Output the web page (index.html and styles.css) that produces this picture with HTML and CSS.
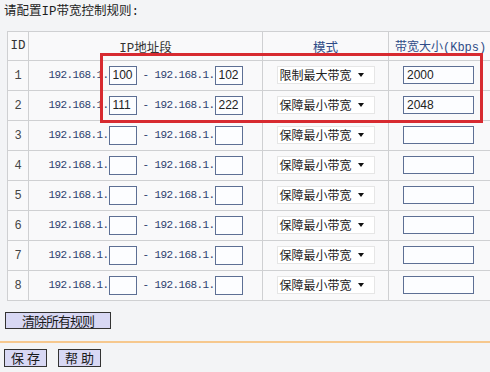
FILE: index.html
```html
<!DOCTYPE html>
<html>
<head>
    <meta charset="utf-8">
    <title>IP带宽控制</title>
    <link rel="stylesheet" href="styles.css">
</head>
<body>
    <div class="page">
        <p class="title">请配置IP带宽控制规则:</p>
        <div class="rules">
            <table class="rule-table">
                <colgroup>
                    <col class="col-id"><col class="col-ip"><col class="col-mode"><col class="col-bw">
                </colgroup>
                <thead>
                    <tr><th class="th-dark">ID</th><th class="th-dark">IP地址段</th><th>模式</th><th class="th-bw">带宽大小(Kbps)</th></tr>
                </thead>
                <tbody>
                    <tr>
                        <td class="id">1</td>
                        <td class="ip">192.168.1.<span class="box">100</span> - 192.168.1.<span class="box">102</span></td>
                        <td class="mode"><span class="select">限制最大带宽<i class="arrow"></i></span></td>
                        <td class="bw"><span class="box wide">2000</span></td>
                    </tr>
                    <tr>
                        <td class="id">2</td>
                        <td class="ip">192.168.1.<span class="box">111</span> - 192.168.1.<span class="box">222</span></td>
                        <td class="mode"><span class="select">保障最小带宽<i class="arrow"></i></span></td>
                        <td class="bw"><span class="box wide">2048</span></td>
                    </tr>
                    <tr>
                        <td class="id">3</td>
                        <td class="ip">192.168.1.<span class="box"></span> - 192.168.1.<span class="box"></span></td>
                        <td class="mode"><span class="select">保障最小带宽<i class="arrow"></i></span></td>
                        <td class="bw"><span class="box wide"></span></td>
                    </tr>
                    <tr>
                        <td class="id">4</td>
                        <td class="ip">192.168.1.<span class="box"></span> - 192.168.1.<span class="box"></span></td>
                        <td class="mode"><span class="select">保障最小带宽<i class="arrow"></i></span></td>
                        <td class="bw"><span class="box wide"></span></td>
                    </tr>
                    <tr>
                        <td class="id">5</td>
                        <td class="ip">192.168.1.<span class="box"></span> - 192.168.1.<span class="box"></span></td>
                        <td class="mode"><span class="select">保障最小带宽<i class="arrow"></i></span></td>
                        <td class="bw"><span class="box wide"></span></td>
                    </tr>
                    <tr>
                        <td class="id">6</td>
                        <td class="ip">192.168.1.<span class="box"></span> - 192.168.1.<span class="box"></span></td>
                        <td class="mode"><span class="select">保障最小带宽<i class="arrow"></i></span></td>
                        <td class="bw"><span class="box wide"></span></td>
                    </tr>
                    <tr>
                        <td class="id">7</td>
                        <td class="ip">192.168.1.<span class="box"></span> - 192.168.1.<span class="box"></span></td>
                        <td class="mode"><span class="select">保障最小带宽<i class="arrow"></i></span></td>
                        <td class="bw"><span class="box wide"></span></td>
                    </tr>
                    <tr>
                        <td class="id">8</td>
                        <td class="ip">192.168.1.<span class="box"></span> - 192.168.1.<span class="box"></span></td>
                        <td class="mode"><span class="select">保障最小带宽<i class="arrow"></i></span></td>
                        <td class="bw"><span class="box wide"></span></td>
                    </tr>
                </tbody>
            </table>
            <div class="highlight"></div>
        </div>
        <div class="actions"><button class="btn clear">清除所有规则</button></div>
        <div class="divider"></div>
        <div class="footer">
            <button class="btn small">保 存</button>
            <button class="btn small">帮 助</button>
        </div>
    </div>
</body>
</html>
```

FILE: styles.css
```css
body { margin: 0; background: #f3f4f6; overflow: hidden; font-family: "Liberation Mono", "Noto Sans CJK SC", monospace; color: #333; }
.page { padding: 4px 0 0 4px; }

.title { margin: 0 0 10px 0; font-size: 12.5px; line-height: 17px; color: #1e1e1e; font-family: "Liberation Mono", "Noto Sans CJK SC", monospace; }

.rules { position: relative; margin-left: 3px; width: 486px; }

.rule-table { width: 486px; table-layout: fixed; border-collapse: collapse; background: #f9f9fa; }
.col-id { width: 21px; }
.col-ip { width: 234px; }
.col-mode { width: 126px; }
.col-bw { width: 105px; }

th, td { border: 1px solid #cfd0d2; padding: 0; font-weight: normal; white-space: nowrap; }
th { height: 28px; font-size: 12.5px; color: #2f4c88; text-align: center; }
th.th-dark { color: #333; }
th.th-bw { text-align: left; padding-left: 6px; font-size: 12px; }
td { height: 29px; }

td.id { text-align: center; font-size: 12px; color: #444; }
td.ip { text-align: center; font-size: 11px; letter-spacing: -0.6px; color: #2d3f6e; }
td.mode { text-align: center; }
td.bw { text-align: left; padding-left: 14px; }

.box { display: inline-block; vertical-align: middle; box-sizing: border-box; width: 28px; height: 19px; border: 1px solid #5d6f94; background: #fcfdff; font-family: "Liberation Sans", sans-serif; font-size: 12px; letter-spacing: 0; color: #222; line-height: 17px; padding-left: 3px; text-align: left; }
.box.wide { width: 71px; height: 18px; line-height: 16px; }

.select { display: inline-flex; align-items: center; box-sizing: border-box; width: 98px; height: 18px; background: #fff; border: 1px solid #e6e6e6; padding-left: 2px; font-family: "Noto Sans CJK SC", sans-serif; font-size: 12px; color: #222; text-align: left; }
.arrow { display: inline-block; margin-left: 6px; width: 0; height: 0; border-left: 3px solid transparent; border-right: 3px solid transparent; border-top: 4px solid #111; }

.highlight { position: absolute; left: 93px; top: 22px; width: 383px; height: 70px; box-sizing: border-box; border: 3px solid #d72a30; }

.actions { margin-top: 11px; }
.btn { display: inline-block; box-sizing: border-box; margin: 0; padding: 0; border: 1px solid #333; background: #d8d8f4; font-family: "Noto Sans CJK SC", sans-serif; color: #1a1a1a; cursor: pointer; }
.btn.clear { width: 106px; height: 17px; font-size: 13px; line-height: 14px; letter-spacing: -1px; margin-left: 1px; }

.divider { margin: 10px 0 0 -4px; height: 2px; background: #f6c88e; }

.footer { margin-top: 6px; display: flex; gap: 11px; }
.btn.small { width: 43px; height: 18px; font-size: 13px; line-height: 15px; }
```
